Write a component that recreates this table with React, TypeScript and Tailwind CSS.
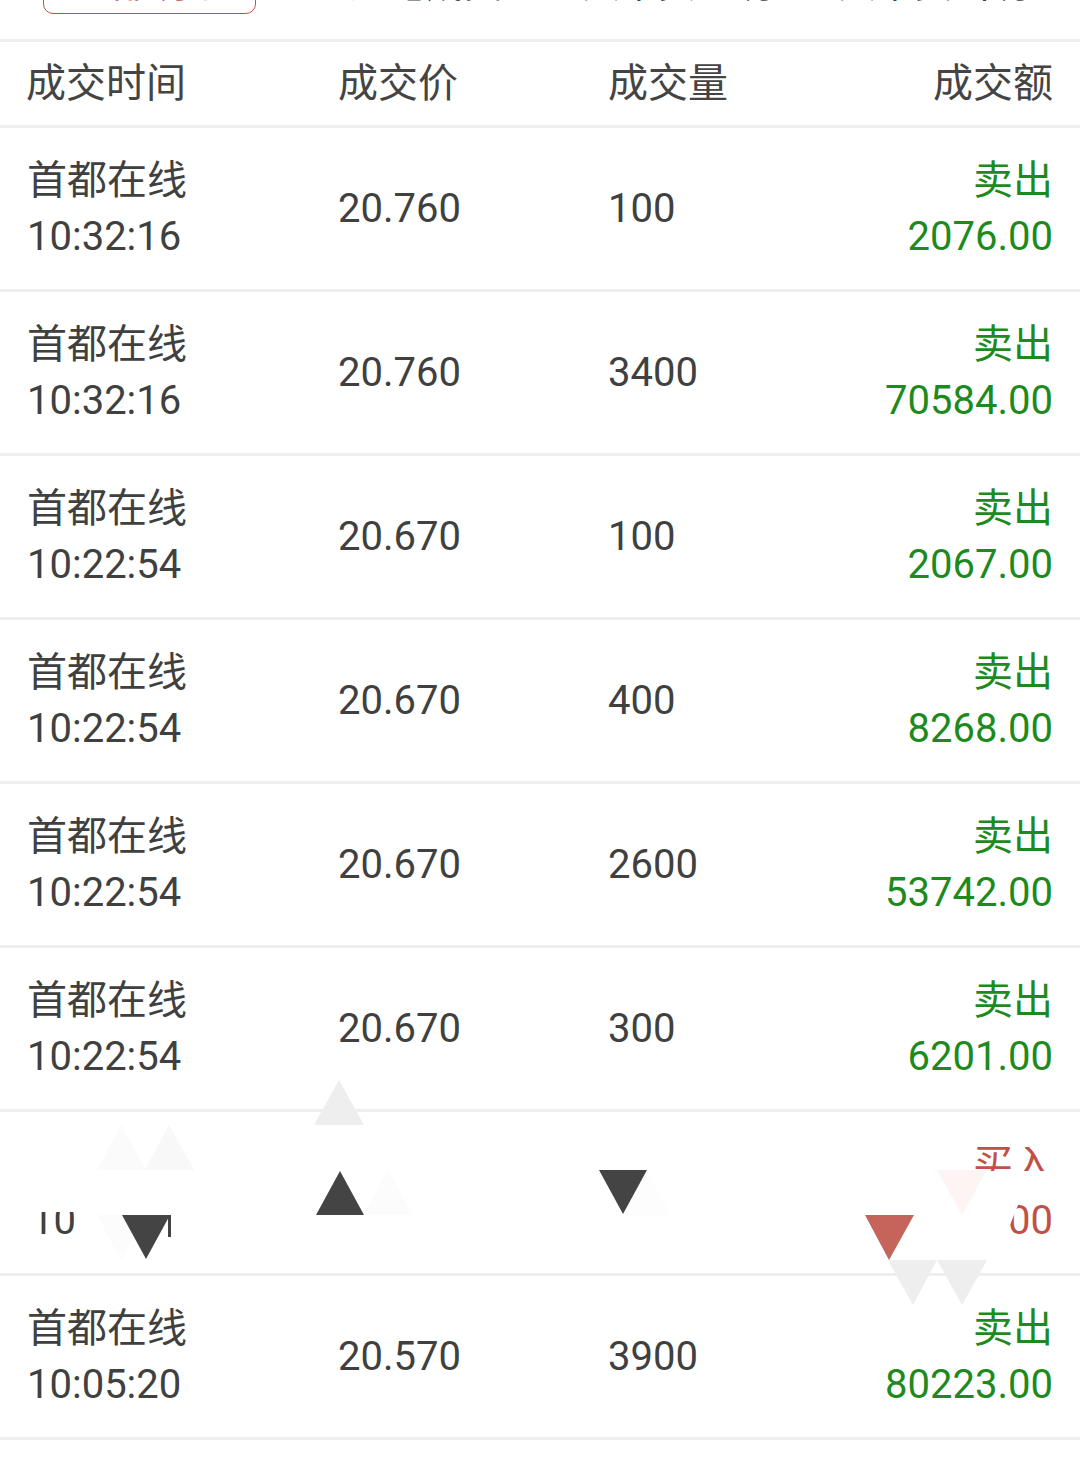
import React from "react";

type Row = { time: string; price: string; vol: string; side: string; amt: string };

const rows: Row[] = [
  { time: "10:32:16", price: "20.760", vol: "100", side: "卖出", amt: "2076.00" },
  { time: "10:32:16", price: "20.760", vol: "3400", side: "卖出", amt: "70584.00" },
  { time: "10:22:54", price: "20.670", vol: "100", side: "卖出", amt: "2067.00" },
  { time: "10:22:54", price: "20.670", vol: "400", side: "卖出", amt: "8268.00" },
  { time: "10:22:54", price: "20.670", vol: "2600", side: "卖出", amt: "53742.00" },
  { time: "10:22:54", price: "20.670", vol: "300", side: "卖出", amt: "6201.00" },
];

const font = { fontFamily: 'Roboto, "Noto Sans CJK SC", sans-serif' };

function DataRow({ r }: { r: Row }) {
  return (
    <div className="flex h-[164px] items-center border-b-[3px] border-[#eeeeee] text-[40px] text-[#404040]">
      <div className="w-[338px] pl-[27px] leading-[56px]">
        <div>首都在线</div>
        <div>{r.time}</div>
      </div>
      <div className="w-[270px] leading-[56px]">{r.price}</div>
      <div className="flex-1 leading-[56px]">{r.vol}</div>
      <div className="pr-[27px] text-right leading-[56px] text-[#1d8a1d]">
        <div>{r.side}</div>
        <div>{r.amt}</div>
      </div>
    </div>
  );
}

function GlitchRow() {
  return (
    <div className="flex h-[164px] items-center border-b-[3px] border-[#eeeeee] text-[40px] text-[#404040]">
      <div className="w-[338px] pl-[31px] leading-[56px]">
        <div>&nbsp;</div>
        <div>10</div>
      </div>
      <div className="w-[270px] leading-[56px]">&nbsp;</div>
      <div className="flex-1 leading-[56px]">&nbsp;</div>
      <div className="pr-[27px] text-right leading-[56px] text-[#c25048]">
        <div>买入</div>
        <div>00</div>
      </div>
    </div>
  );
}

export default function App() {
  const last: Row = { time: "10:05:20", price: "20.570", vol: "3900", side: "卖出", amt: "80223.00" };
  return (
    <div className="relative h-[1466px] w-[1080px] overflow-hidden bg-white" style={font}>
      <div className="h-[42px] overflow-hidden border-b-[3px] border-[#eeeeee]">
        <div className="-mt-[46px] flex items-start text-[38px] text-[#404040]">
          <div className="ml-[43px] h-[60px] w-[213px] rounded-[10px] border border-[#c25048] text-center leading-[58px] text-[#c25048]">
            全部明细
          </div>
          <div className="ml-[94px] leading-[60px]">逐笔成交</div>
          <div className="ml-[80px] leading-[60px]">大单买入明</div>
          <div className="ml-[66px] leading-[60px]">大单卖出明</div>
        </div>
      </div>
      <div className="flex h-[86px] items-center border-b-[3px] border-[#eeeeee] text-[40px] text-[#444444]">
        <div className="w-[338px] pl-[26px]">成交时间</div>
        <div className="w-[270px]">成交价</div>
        <div className="flex-1">成交量</div>
        <div className="pr-[27px]">成交额</div>
      </div>
      {rows.map((r, i) => (
        <DataRow key={i} r={r} />
      ))}
      <GlitchRow />
      <DataRow r={last} />

      <svg
        className="pointer-events-none absolute left-0 top-0"
        width="1080"
        height="1466"
        viewBox="0 0 1080 1466"
      >
        <rect x="930" y="1113" width="130" height="34" fill="#ffffff" />
        <rect x="930" y="1171" width="130" height="34" fill="#ffffff" />
        <polygon points="990,1205 1018,1205 1004,1240" fill="#ffffff" />
        <rect x="20" y="1196" width="60" height="16" fill="#ffffff" />
        <polygon points="121,1125 97,1170 146,1170" fill="#fbfbfb" />
        <polygon points="169,1125 145,1170 194,1170" fill="#f8f8f8" />
        <polygon points="97,1215 146,1215 121,1260" fill="#fcfcfc" />
        <polygon points="388,1170 364,1215 413,1215" fill="#fcfcfc" />
        <polygon points="647,1170 671,1215 623,1215" fill="#fdfdfd" />
        <polygon points="937,1170 987,1170 962,1215" fill="#fdf5f4" />
        <polygon points="339,1080 314,1125 364,1125" fill="#eeeeee" />
        <polygon points="340,1171 316,1215 364,1215" fill="#444444" />
        <polygon points="122,1215 170,1215 146,1259" fill="#444444" />
        <rect x="168" y="1215" width="3" height="22" fill="#444444" />
        <polygon points="599,1170 647,1170 623,1214" fill="#444444" />
        <polygon points="865,1215 914,1215 889,1260" fill="#c4645a" />
        <polygon points="888,1260 937,1260 913,1305" fill="#eeeeee" />
        <polygon points="937,1260 987,1260 962,1305" fill="#eeeeee" />
      </svg>
    </div>
  );
}
